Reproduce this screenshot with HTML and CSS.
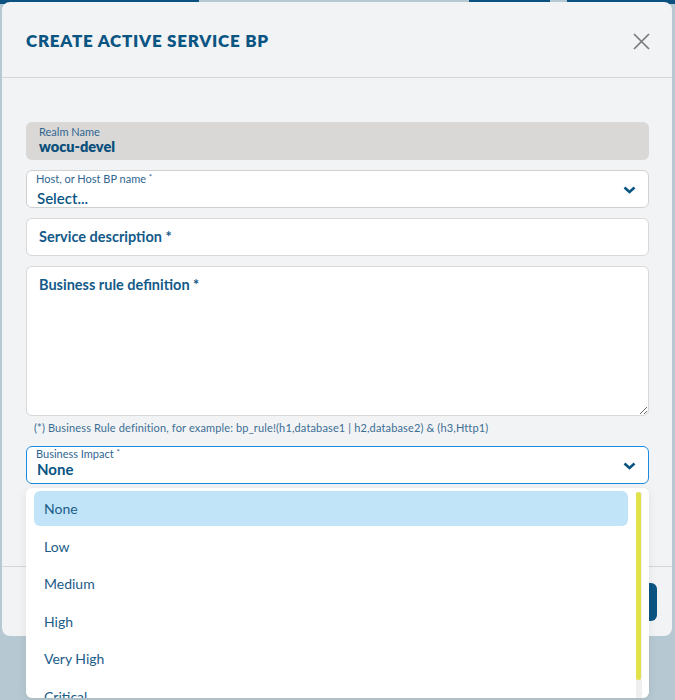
FILE: index.html
```html
<!DOCTYPE html>
<html lang="en">
<head>
<meta charset="utf-8">
<title>Create Active Service BP</title>
<link rel="stylesheet" href="styles.css">
</head>
<body>
<div class="modal">
  <div class="modal-header">
    <h1 class="modal-title">Create Active Service BP</h1>
    <button class="close-btn" aria-label="Close">
      <svg width="17" height="17" viewBox="0 0 17 17"><path d="M1 1L16 16M16 1L1 16" stroke="#7a7a7a" stroke-width="1.7" fill="none"/></svg>
    </button>
  </div>
  <div class="modal-body">
    <div class="field field-readonly">
      <span class="field-label">Realm Name</span>
      <span class="field-value bold">wocu-devel</span>
    </div>
    <div class="field field-select">
      <div class="select-text">
        <span class="field-label">Host, or Host BP name <sup>*</sup></span>
        <span class="field-value">Select...</span>
      </div>
      <svg class="chevron" width="13" height="8" viewBox="0 0 13 8"><path d="M1.5 1.5L6.5 6L11.5 1.5" stroke="#0b5583" stroke-width="2.6" fill="none"/></svg>
    </div>
    <input class="field field-input" type="text" placeholder="Service description *">
    <textarea class="field field-textarea" placeholder="Business rule definition *"></textarea>
    <p class="helper">(*) Business Rule definition, for example: bp_rule!(h1,database1 | h2,database2) &amp; (h3,Http1)</p>
    <div class="select-wrap">
      <div class="field field-select focused">
        <div class="select-text">
          <span class="field-label">Business Impact <sup>*</sup></span>
          <span class="field-value big">None</span>
        </div>
        <svg class="chevron" width="13" height="8" viewBox="0 0 13 8"><path d="M1.5 1.5L6.5 6L11.5 1.5" stroke="#0b5583" stroke-width="2.6" fill="none"/></svg>
      </div>
      <div class="menu">
        <ul class="menu-list">
          <li class="menu-item active">None</li>
          <li class="menu-item">Low</li>
          <li class="menu-item">Medium</li>
          <li class="menu-item">High</li>
          <li class="menu-item">Very High</li>
          <li class="menu-item">Critical</li>
        </ul>
        <div class="scroll-track"><div class="scroll-thumb"></div></div>
      </div>
    </div>
  </div>
  <div class="modal-footer">
    <button class="primary-btn">Create</button>
  </div>
</div>
</body>
</html>
```

FILE: styles.css
```css
* { box-sizing: border-box; }

html, body {
  margin: 0;
  height: 700px;
  overflow: hidden;
}

body {
  font-family: Lato, "Liberation Sans", sans-serif;
  background-color: #b6c8d1;
  background-image: linear-gradient(to right, #0b5280 0, #0b5280 199px, #b6c8d1 199px, #b6c8d1 469px, #0b5280 469px, #0b5280 550px, #b6c8d1 550px, #b6c8d1 567px, #0b5280 567px);
  background-size: 100% 4px;
  background-repeat: no-repeat;
  padding: 2px 3px 0 2px;
}

.modal {
  width: 670px;
  height: 634px;
  background: #f2f3f5;
  border-radius: 8px;
  display: flex;
  flex-direction: column;
}

.modal-header {
  height: 76px;
  flex: none;
  border-bottom: 1px solid #d4d6d9;
  display: flex;
  align-items: center;
  justify-content: space-between;
  padding: 0 22px 0 24px;
}

.modal-title {
  margin: 0;
  font-size: 17px;
  font-weight: 800;
  letter-spacing: 0.75px;
  text-transform: uppercase;
  color: #0b5583;
  padding-top: 1px;
}

.close-btn {
  border: 0;
  background: none;
  padding: 0;
  width: 17px;
  height: 17px;
  display: flex;
  margin-top: 3px;
}

.modal-body {
  height: 489px;
  flex: none;
  border-bottom: 1px solid #d4d6d9;
  padding: 44px 23px 0 24px;
  display: flex;
  flex-direction: column;
}

.field {
  width: 623px;
  border-radius: 6px;
  flex: none;
}

.field-readonly {
  height: 38px;
  background: #d9d8d7;
  display: flex;
  flex-direction: column;
  padding: 3px 13px 0;
  margin-bottom: 10px;
}

.field-label {
  font-size: 11px;
  line-height: 13px;
  color: #2f6690;
}

.field-label sup {
  font-size: 8px;
  vertical-align: 3px;
  line-height: 0;
}

.field-value {
  font-size: 15px;
  line-height: 18px;
  color: #0b5583;
  font-weight: 600;
}

.field-value.bold { font-weight: 800; color: #0b4f7c; font-size: 14.5px; }
.field-value.big { font-size: 15px; font-weight: 700; line-height: 16px; }

.field-select {
  height: 38px;
  background: #fff;
  border: 1px solid #cfd1d3;
  display: flex;
  align-items: center;
  justify-content: space-between;
  padding: 0 12px 0 9px;
  margin-bottom: 10px;
}

.select-text {
  display: flex;
  flex-direction: column;
  align-self: flex-start;
  padding-top: 1px;
}

.select-text .field-value { margin-top: 4px; padding-left: 1px; }
.focused .select-text { padding-top: 0; }
.focused .select-text .field-value { margin-top: 1px; }

.field-select.focused {
  border-color: #1b8be0;
  margin-bottom: 0;
}

.chevron { display: block; margin-top: 2px; }

.field-input,
.field-textarea {
  background: #fff;
  border: 1px solid #d6d8da;
  font-family: inherit;
  font-size: 14.5px;
  font-weight: 700;
  color: #0b5583;
  outline: none;
}

.field-input {
  height: 38px;
  padding: 0 12px 2px;
  margin-bottom: 10px;
}

.field-textarea {
  height: 150px;
  padding: 9px 12px;
  resize: vertical;
  margin: 0;
  display: block;
}

.field-input::placeholder,
.field-textarea::placeholder {
  color: #145a89;
  opacity: 1;
  font-weight: 700;
}

.helper {
  margin: 0;
  height: 30px;
  padding: 5px 0 0 8px;
  font-size: 11px;
  line-height: 13px;
  color: #3b6e94;
  letter-spacing: 0.14px;
}

.select-wrap {
  position: relative;
}

.menu {
  position: absolute;
  top: 42px;
  left: 0;
  width: 623px;
  height: 210px;
  background: #fff;
  border-radius: 6px;
  box-shadow: 0 2px 10px rgba(0, 0, 0, 0.08);
  display: flex;
  z-index: 5;
}

.menu-list {
  list-style: none;
  margin: 0;
  padding: 3px 0 0 8px;
  flex: 1;
  overflow: hidden;
}

.menu-item {
  height: 35px;
  margin-bottom: 2.6px;
  padding-left: 10px;
  display: flex;
  align-items: center;
  font-size: 14px;
  color: #1b5c88;
  border-radius: 6px;
}

.menu-item.active { background: #c2e4f8; }

.scroll-track {
  width: 6px;
  margin: 4px 7px 0 8px;
  background: #efefef;
}

.scroll-thumb {
  width: 5px;
  height: 188px;
  background: #e1e14a;
  border-radius: 3px;
}

.modal-footer {
  flex: 1;
  display: flex;
  justify-content: flex-end;
  align-items: flex-start;
  padding: 16px 15px 0 0;
}

.primary-btn {
  height: 38px;
  padding: 0 24px;
  border: 0;
  border-radius: 6px;
  background: #0b5583;
  color: #fff;
  font-family: inherit;
  font-weight: 700;
  font-size: 14px;
}
```
